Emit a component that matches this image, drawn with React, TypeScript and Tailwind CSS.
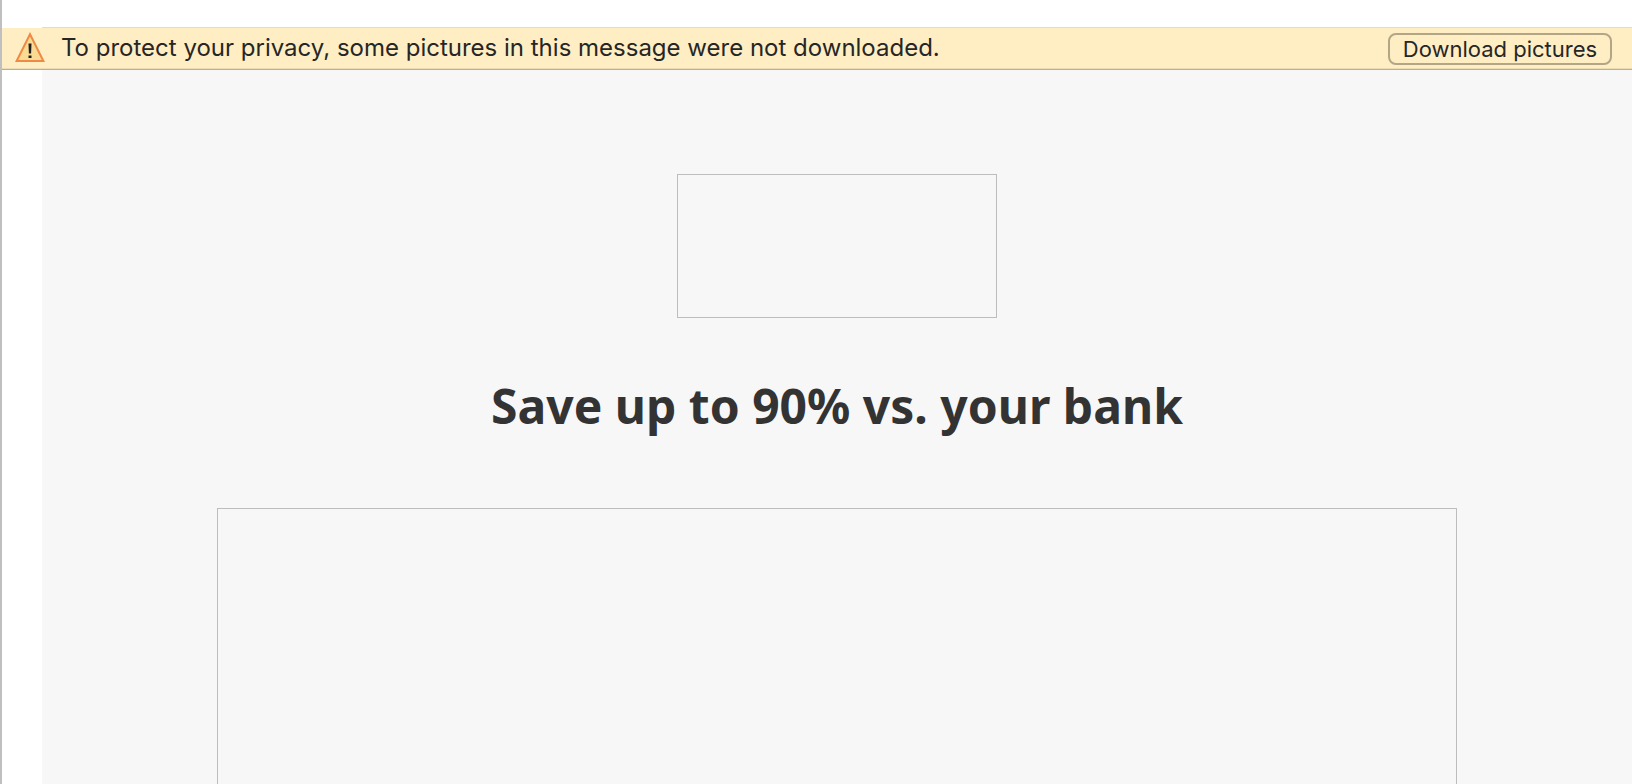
function WarningIcon() {
  return (
    <svg className="shrink-0" width="30" height="34" viewBox="0 0 30 34" aria-hidden="true">
      <path d="M15 2.2 L28.4 29 L1.6 29 Z" fill="#f9db94" stroke="#ef8a45" strokeWidth="2" />
      <path d="M13.5 11.5h3l-.4 10h-2.2z" fill="#1f1f1f" />
      <path d="M13.5 23.5h3v2.5h-3z" fill="#1f1f1f" />
    </svg>
  );
}

function PrivacyBar() {
  return (
    <div
      role="alert"
      className="flex items-center bg-[#ffeec3] border-b border-[#bfae88] shadow-[inset_0_-1px_0_#ecdcb2] pt-px pl-[13px] pr-5 h-[42px] font-[Inter,sans-serif] text-[#262626]"
    >
      <WarningIcon />
      <p className="ml-4 flex-1 pb-0.5 text-2xl">
        To protect your privacy, some pictures in this message were not downloaded.
      </p>
      <button
        type="button"
        className="h-8 w-56 shrink-0 rounded-lg border-2 border-[#b3a687] text-[22px] leading-7"
      >
        Download pictures
      </button>
    </div>
  );
}

export default function App() {
  return (
    <div className="min-h-screen bg-white border-l-2 border-[#bfbfbf]">
      {/* bottom edge of the message header */}
      <div className="ml-10 h-7 border-b border-[#dcdcdc]" />
      <PrivacyBar />

      <main className="ml-10 flex flex-col items-center bg-[#f7f7f7] pt-[104px]">
        {/* blocked logo */}
        <div className="h-36 w-80 border border-[#bdbdbd]" />

        <h1 className="mt-14 text-center font-['Noto_Sans',sans-serif] text-5xl leading-16 font-bold text-[#333333]">
          Save up to 90% vs. your bank
        </h1>

        {/* blocked hero picture, runs past the fold */}
        <div className="mt-[70px] h-[276px] w-[78%] border border-b-0 border-[#bdbdbd]" />
      </main>
    </div>
  );
}
